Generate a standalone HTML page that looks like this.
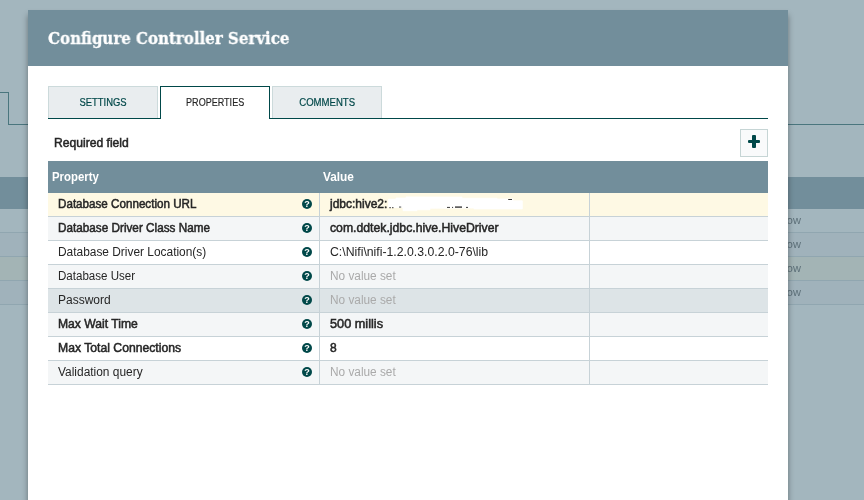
<!DOCTYPE html>
<html lang="en">
<head>
<meta charset="utf-8">
<title>Configure Controller Service</title>
<style>
*{box-sizing:border-box;margin:0;padding:0}
html,body{width:864px;height:500px;overflow:hidden}
body{position:relative;background:#a3b6be;font-family:"Liberation Sans",sans-serif;font-size:13px;color:#262626}
#page{position:absolute;left:0;top:0;width:864px;height:500px;overflow:hidden;will-change:transform}
.abs{position:absolute}
/* background page (dimmed) */
.bgline{position:absolute;background:#4a767e}
.bghead{position:absolute;left:0;top:177px;width:864px;height:32px;background:#728e9b}
.bgrow{position:absolute;left:0;width:864px;height:24px;border-bottom:1px solid #90a6b0;font-size:11px;line-height:23px;color:#5c6f78;white-space:nowrap}
.bgrow span{position:absolute;left:755px;top:0}
/* dialog */
#dialog{position:absolute;left:28px;top:10px;width:760px;height:520px;background:#fff;box-shadow:0 5px 6px rgba(0,0,0,.38)}
#dhead{position:absolute;left:0;top:0;width:760px;height:56px;background:#728e9b}
#dtitle{position:absolute;left:20px;top:16px;font-family:"DejaVu Serif Condensed","DejaVu Serif","Liberation Serif",serif;font-weight:bold;font-size:17px;line-height:24px;color:#fff;white-space:nowrap;transform-origin:0 50%;transform:scaleX(.9825);-webkit-text-stroke:.3px #fff}
.tab{position:absolute;top:76px;width:110px;height:32px;border:1px solid #ccdadb;border-bottom:none;background:#e9edef;color:#004849;font-size:10px;font-weight:normal;text-align:center;line-height:32px;-webkit-text-stroke:.2px #004849}
.tab.sel{border:1px solid #004849;border-bottom:none;background:#fff;color:#262626;height:33px;-webkit-text-stroke:.15px #262626}
#tabline{position:absolute;left:20px;top:108px;width:720px;height:1px;background:#004849}
#req{transform:scaleX(1.01);transform-origin:0 50%;position:absolute;left:26.4px;top:125px;font-weight:normal;-webkit-text-stroke:.5px #262626;font-size:12px;line-height:16px;white-space:nowrap}
#addbtn{position:absolute;left:712px;top:119px;width:28px;height:28px;border:1px solid #c6d5d5;background:#f9fafb}
#addbtn i{position:absolute;background:#004849;border-radius:1px}
#thead{position:absolute;left:20px;top:151px;width:720px;height:32px;background:#728e9b;color:#fff;font-weight:bold;font-size:12px;line-height:32px}
#thead span{position:absolute;top:0}
.row{position:absolute;left:20px;width:720px;height:24px;border-bottom:1px solid #c7d2d7;background:#fff;line-height:23px;font-size:12px;white-space:nowrap}
.row.e{background:#f4f6f7}
.row.s{background:#fef9e4}
.row.h{background:#dde4e7}
.row .n{position:absolute;left:10px;top:0;transform-origin:0 50%}
.row .v{position:absolute;left:282px;top:0;transform-origin:0 50%}
.row b{font-weight:normal;-webkit-text-stroke:.5px #262626}
.row .u{color:#aaa}
.row .c1{position:absolute;left:271px;top:0;width:1px;height:23px;background:#c7d2d7}
.row .c2{position:absolute;left:541px;top:0;width:1px;height:23px;background:#c7d2d7}
.q{position:absolute;left:254px;top:5.6px;width:10.2px;height:10.2px;border-radius:50%;background:#004849;color:#fff;font:bold 9px/10.4px "Liberation Sans",sans-serif;text-align:center;overflow:hidden}
</style>
</head>
<body>
<div id="page">
<!-- dimmed background page -->
<div class="bgline" style="left:0;top:92px;width:9px;height:1px"></div>
<div class="bgline" style="left:8px;top:92px;width:1px;height:33px"></div>
<div class="bgline" style="left:8px;top:124px;width:856px;height:1px"></div>
<div class="bghead"></div>
<div class="bgrow" style="top:209px;background:#a3b6be"><span>NiFi Flow</span></div>
<div class="bgrow" style="top:233px;background:#a0b2bb"><span>NiFi Flow</span></div>
<div class="bgrow" style="top:257px;background:#a3b4b5"><span>NiFi Flow</span></div>
<div class="bgrow" style="top:281px;background:#a0b2bb"><span>NiFi Flow</span></div>

<div id="dialog">
  <div id="dhead"><div id="dtitle">Configure Controller Service</div></div>
  <div class="tab" style="left:20px"><span style="display:inline-block;transform:scale(.942,1)">SETTINGS</span></div>
  <div class="tab sel" style="left:132px"><span style="display:inline-block;transform:scale(.904,1)">PROPERTIES</span></div>
  <div class="tab" style="left:244px"><span style="display:inline-block;transform:scale(.957,1)">COMMENTS</span></div>
  <div id="tabline"></div>
  <div class="abs" style="left:133px;top:108px;width:108px;height:1px;background:#fff"></div>
  <div id="req">Required field</div>
  <div id="addbtn"><i style="left:6.6px;top:9.8px;width:12.8px;height:3.3px"></i><i style="left:11.2px;top:5.2px;width:3.6px;height:12.6px"></i></div>
  <div id="thead"><span style="left:4.4px;transform:scaleX(.948);transform-origin:0 50%">Property</span><span style="left:275.2px;transform:scaleX(.985);transform-origin:0 50%">Value</span></div>

  <div class="row s" style="top:183px"><b class="n" style="transform:scaleX(.97)">Database Connection URL</b><span class="q">?</span><i class="c1"></i><b class="v" style="transform:scaleX(1.0)">jdbc:hive2:</b><svg class="abs" style="left:340px;top:3px" width="136" height="16" viewBox="0 0 136 16"><path d="M.6 3.2H8V2H18V.9L74 1.1V2.2H109V3H125V4.8H134.3V12.9H86V12L42 12.3V13.8H29V14.7H15V11.5H.6Z" fill="#fff" stroke="#fff" stroke-width=".8" stroke-linejoin="round"/><g fill="#3a3a3a"><rect x="1.3" y="11.2" width="1.6" height="1"/><rect x="4" y="11.2" width="1.5" height="1"/><rect x="11" y="10.6" width="2.2" height=".9"/><rect x="59" y="10.9" width="3" height="1"/><rect x="64" y="10.9" width="1.1" height="1"/><rect x="67" y="10.4" width="7" height="1.4"/><rect x="78" y="10.9" width="2" height="1"/><rect x="120.2" y="3" width="3.8" height="1"/></g></svg><i class="c2"></i></div>
  <div class="row e" style="top:207px"><b class="n" style="transform:scaleX(.978)">Database Driver Class Name</b><span class="q">?</span><i class="c1"></i><b class="v" style="transform:scaleX(1.019)">com.ddtek.jdbc.hive.HiveDriver</b><i class="c2"></i></div>
  <div class="row" style="top:231px"><span class="n" style="transform:scaleX(.992)">Database Driver Location(s)</span><span class="q">?</span><i class="c1"></i><span class="v" style="transform:scaleX(1.022)">C:\Nifi\nifi-1.2.0.3.0.2.0-76\lib</span><i class="c2"></i></div>
  <div class="row e" style="top:255px"><span class="n" style="transform:scaleX(.964)">Database User</span><span class="q">?</span><i class="c1"></i><span class="v u" style="left:281.5px;transform:scaleX(.985)">No value set</span><i class="c2"></i></div>
  <div class="row h" style="top:279px"><span class="n">Password</span><span class="q">?</span><i class="c1"></i><span class="v u" style="left:281.5px;transform:scaleX(.985)">No value set</span><i class="c2"></i></div>
  <div class="row e" style="top:303px"><b class="n" style="transform:scaleX(1.012)">Max Wait Time</b><span class="q">?</span><i class="c1"></i><b class="v" style="transform:scaleX(1.06)">500 millis</b><i class="c2"></i></div>
  <div class="row" style="top:327px"><b class="n" style="transform:scaleX(1.016)">Max Total Connections</b><span class="q">?</span><i class="c1"></i><b class="v">8</b><i class="c2"></i></div>
  <div class="row e" style="top:351px"><span class="n" style="transform:scaleX(.994)">Validation query</span><span class="q">?</span><i class="c1"></i><span class="v u" style="left:281.5px;transform:scaleX(.985)">No value set</span><i class="c2"></i></div>
</div>

</div>
</body>
</html>
